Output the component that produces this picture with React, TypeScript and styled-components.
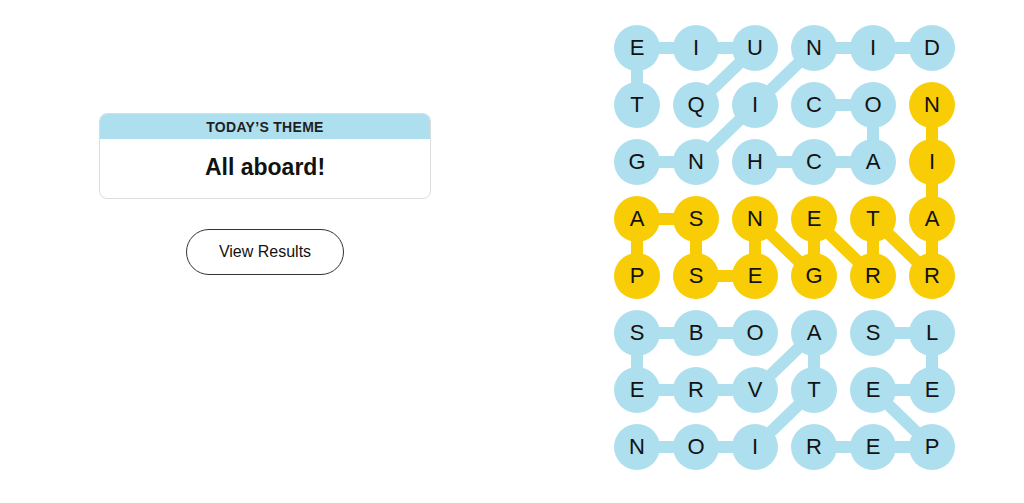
import React from "react";
import styled, { createGlobalStyle } from "styled-components";

const GlobalStyle = createGlobalStyle`
  html, body {
    margin: 0;
    padding: 0;
    background: #ffffff;
  }
  body {
    font-family: "Liberation Sans", Arial, sans-serif;
    color: #121212;
  }
`;

const BLUE = "#aedfee";
const YELLOW = "#f8cd05";

const CELL = 46;
const COL_STEP = 59;
const ROW_STEP = 57;

const letters = [
  "EIUNID",
  "TQICON",
  "GNHCAI",
  "ASNETA",
  "PSEGRR",
  "SBOASL",
  "ERVTEE",
  "NOIREP",
];

type Cell = [number, number];

type Word = {
  path: Cell[];
  spangram?: boolean;
};

// found words, as [row, col] in the order they were traced
const words: Word[] = [
  { path: [[1, 1], [0, 2], [0, 1], [0, 0], [1, 0]] },
  { path: [[0, 5], [0, 4], [0, 3], [1, 2], [2, 1], [2, 0]] },
  { path: [[1, 3], [1, 4], [2, 4], [2, 3], [2, 2]] },
  {
    spangram: true,
    path: [
      [4, 0], [3, 0], [3, 1], [4, 1], [4, 2], [3, 2], [4, 3],
      [3, 3], [4, 4], [3, 4], [4, 5], [3, 5], [2, 5], [1, 5],
    ],
  },
  {
    path: [
      [5, 2], [5, 1], [5, 0], [6, 0], [6, 1], [6, 2],
      [5, 3], [6, 3], [7, 2], [7, 1], [7, 0],
    ],
  },
  { path: [[5, 4], [5, 5], [6, 5], [6, 4], [7, 5], [7, 4], [7, 3]] },
];

const spanCells = new Set(
  words.filter((w) => w.spangram).flatMap((w) => w.path.map(([r, c]) => `${r}-${c}`))
);

const Page = styled.main`
  display: flex;
  align-items: flex-start;
  padding: 25px 0 0 99px;
`;

const Side = styled.section`
  width: 332px;
  margin-top: 88px;
  display: flex;
  flex-direction: column;
  align-items: center;
`;

const ThemeCard = styled.div`
  width: 100%;
  box-sizing: border-box;
  border: 1px solid #dcdcdc;
  border-radius: 8px;
  overflow: hidden;
`;

const ThemeLabel = styled.div`
  height: 25px;
  background: ${BLUE};
  display: flex;
  align-items: center;
  justify-content: center;
  font-size: 14px;
  font-weight: 700;
  letter-spacing: 0.3px;
  color: #1f1f1f;
`;

const ThemeTitle = styled.h2`
  margin: 0;
  height: 59px;
  display: flex;
  align-items: center;
  justify-content: center;
  font-size: 23px;
  font-weight: 700;
  padding-bottom: 2px;
  box-sizing: border-box;
`;

const ResultsButton = styled.button`
  margin-top: 30px;
  width: 158px;
  height: 46px;
  border: 1px solid #333333;
  border-radius: 23px;
  background: #ffffff;
  font-family: "Liberation Sans", Arial, sans-serif;
  font-size: 16px;
  color: #121212;
  cursor: pointer;
`;

const Board = styled.div`
  position: relative;
  margin-left: 183px;
`;

const Links = styled.svg`
  position: absolute;
  top: 0;
  left: 0;
`;

const Grid = styled.div`
  position: relative;
  display: grid;
  grid-template-columns: repeat(6, ${CELL}px);
  grid-auto-rows: ${CELL}px;
  column-gap: ${COL_STEP - CELL}px;
  row-gap: ${ROW_STEP - CELL}px;
`;

const Letter = styled.div<{ $span: boolean }>`
  width: ${CELL}px;
  height: ${CELL}px;
  border-radius: 50%;
  background: ${(p) => (p.$span ? YELLOW : BLUE)};
  display: flex;
  align-items: center;
  justify-content: center;
  font-size: 22px;
  color: #121212;
  text-transform: uppercase;
`;

const cx = (c: number) => CELL / 2 + c * COL_STEP;
const cy = (r: number) => CELL / 2 + r * ROW_STEP;

const boardW = CELL + 5 * COL_STEP;
const boardH = CELL + 7 * ROW_STEP;

export default function App() {
  return (
    <>
      <GlobalStyle />
      <Page>
        <Side>
          <ThemeCard>
            <ThemeLabel>TODAY’S THEME</ThemeLabel>
            <ThemeTitle>All aboard!</ThemeTitle>
          </ThemeCard>
          <ResultsButton>View Results</ResultsButton>
        </Side>
        <Board>
          <Links width={boardW} height={boardH} viewBox={`0 0 ${boardW} ${boardH}`}>
            {words.map((w, i) => (
              <polyline
                key={i}
                points={w.path.map(([r, c]) => `${cx(c)},${cy(r)}`).join(" ")}
                fill="none"
                stroke={w.spangram ? YELLOW : BLUE}
                strokeWidth={12}
                strokeLinejoin="round"
              />
            ))}
          </Links>
          <Grid>
            {letters.map((row, r) =>
              row.split("").map((ch, c) => (
                <Letter key={`${r}-${c}`} $span={spanCells.has(`${r}-${c}`)}>
                  {ch}
                </Letter>
              ))
            )}
          </Grid>
        </Board>
      </Page>
    </>
  );
}
